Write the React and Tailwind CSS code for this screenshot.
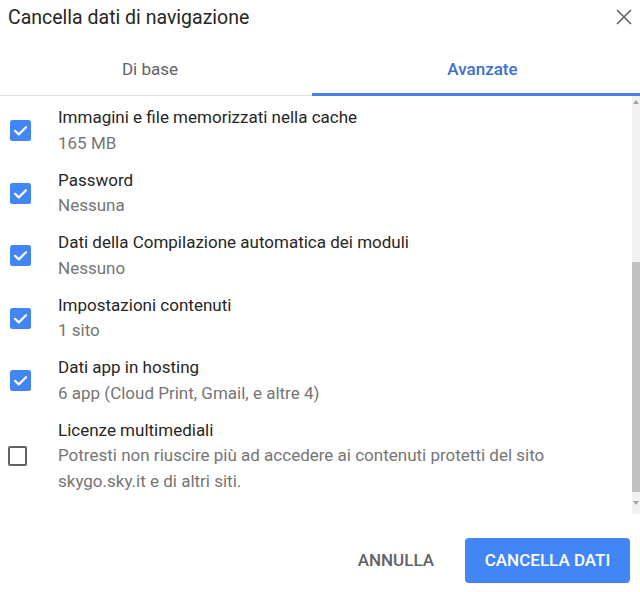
const items = [
  { title: 'Immagini e file memorizzati nella cache', sub: ['165 MB'], checked: true },
  { title: 'Password', sub: ['Nessuna'], checked: true },
  { title: 'Dati della Compilazione automatica dei moduli', sub: ['Nessuno'], checked: true },
  { title: 'Impostazioni contenuti', sub: ['1 sito'], checked: true },
  { title: 'Dati app in hosting', sub: ['6 app (Cloud Print, Gmail, e altre 4)'], checked: true },
  {
    title: 'Licenze multimediali',
    sub: ['Potresti non riuscire più ad accedere ai contenuti protetti del sito', 'skygo.sky.it e di altri siti.'],
    checked: false,
  },
]

function Checkbox({ checked }) {
  if (!checked) {
    return <div className="w-[19px] h-[20px] ml-[8px] mr-[31px] rounded-[2px] border-2 border-[#5f6368] shrink-0" />
  }
  return (
    <svg width="21" height="21" viewBox="0 0 21 21" className="ml-[10px] mr-[27px] shrink-0">
      <rect x="0" y="0" width="21" height="21" rx="2.5" fill="#4285f4" />
      <path d="M5 10.8 L8.8 14.4 L16 7.2" fill="none" stroke="#fff" strokeWidth="2.2" strokeLinecap="round" strokeLinejoin="round" />
    </svg>
  )
}

export default function App() {
  return (
    <div className="w-[640px] h-[592px] bg-white overflow-hidden" style={{ fontFamily: 'Roboto, "Liberation Sans", sans-serif' }}>
      <div className="h-[44px] pt-[6px] pl-[8px] pr-[8px] flex items-start justify-between">
        <h1 className="text-[19.5px] leading-[24px] text-[#262626]">Cancella dati di navigazione</h1>
        <svg width="16" height="16" viewBox="0 0 16 16" className="mt-[3px]">
          <path d="M1 1 L15 15 M15 1 L1 15" stroke="#5f6368" strokeWidth="1.6" />
        </svg>
      </div>

      <div className="flex h-[52px] border-b border-[#e0e0e0]">
        <div className="w-[312px] flex items-center justify-center text-[17px] text-[#5f6368] pr-[12px]">Di base</div>
        <div className="flex-1 flex items-center justify-center text-[17px] font-medium text-[#3b6fd0] border-b-[3px] border-[#4a80e6] -mb-px pt-[3px] pl-[13px]">
          Avanzate
        </div>
      </div>

      <div className="flex h-[418px]">
        <div className="flex-1 pt-[9px] flex flex-col gap-[11.5px]">
          {items.map(item => (
            <div key={item.title} className="flex items-center">
              <Checkbox checked={item.checked} />
              <div className="text-[17px] leading-[25.5px]">
                <div className="text-[#262626]">{item.title}</div>
                {item.sub.map(s => (
                  <div key={s} className="text-[#757575]">{s}</div>
                ))}
              </div>
            </div>
          ))}
        </div>
        <div className="w-[8px] bg-[#f1f1f1] flex flex-col">
          <div className="h-[12px] flex items-center justify-center">
            <svg width="6" height="4" viewBox="0 0 6 4"><path d="M0 4 L3 0 L6 4 Z" fill="#a3a3a3" /></svg>
          </div>
          <div className="h-[154px]" />
          <div className="h-[230px] bg-[#c1c1c1]" />
          <div className="flex-1 flex items-center justify-center">
            <svg width="6" height="4" viewBox="0 0 6 4"><path d="M0 0 L3 4 L6 0 Z" fill="#a3a3a3" /></svg>
          </div>
        </div>
      </div>

      <div className="flex justify-end items-center gap-[31px] pt-[24px] pr-[10px]">
        <button className="text-[17px] font-medium text-[#5f6368]">ANNULLA</button>
        <button className="w-[165px] h-[45px] rounded-[4px] bg-[#4285f4] text-white text-[17px] font-medium">CANCELLA DATI</button>
      </div>
    </div>
  )
}
